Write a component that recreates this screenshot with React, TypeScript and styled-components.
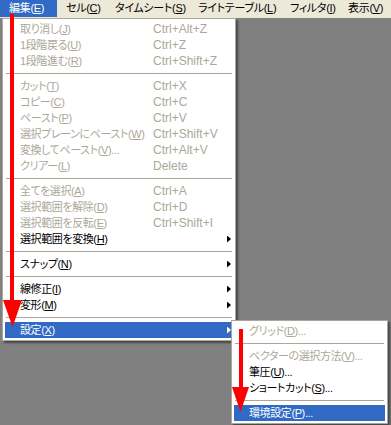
import React from "react";
import styled, { createGlobalStyle } from "styled-components";

const GlobalStyle = createGlobalStyle`
  html, body {
    margin: 0;
    padding: 0;
    background: #808080;
  }
  body {
    font-family: "Liberation Sans", "Noto Sans CJK JP", sans-serif;
    font-size: 12px;
    font-feature-settings: "palt";
  }
`;

const colors = {
  bar: "#ECE9D8",
  desk: "#808080",
  white: "#FFFFFF",
  border: "#ACA899",
  disabled: "#ACA899",
  highlight: "#316AC5",
  text: "#000000",
  arrow: "#FF0000",
};

type Entry =
  | { sep: true }
  | {
      sep?: false;
      label: string;
      accel: string;
      dots?: boolean;
      shortcut?: string;
      disabled?: boolean;
      sub?: boolean;
      active?: boolean;
    };

const editItems: Entry[] = [
  { label: "取り消し", accel: "J", shortcut: "Ctrl+Alt+Z", disabled: true },
  { label: "1段階戻る", accel: "U", shortcut: "Ctrl+Z", disabled: true },
  { label: "1段階進む", accel: "R", shortcut: "Ctrl+Shift+Z", disabled: true },
  { sep: true },
  { label: "カット", accel: "T", shortcut: "Ctrl+X", disabled: true },
  { label: "コピー", accel: "C", shortcut: "Ctrl+C", disabled: true },
  { label: "ペースト", accel: "P", shortcut: "Ctrl+V", disabled: true },
  { label: "選択プレーンにペースト", accel: "W", shortcut: "Ctrl+Shift+V", disabled: true },
  { label: "変換してペースト", accel: "V", dots: true, shortcut: "Ctrl+Alt+V", disabled: true },
  { label: "クリアー", accel: "L", shortcut: "Delete", disabled: true },
  { sep: true },
  { label: "全てを選択", accel: "A", shortcut: "Ctrl+A", disabled: true },
  { label: "選択範囲を解除", accel: "D", shortcut: "Ctrl+D", disabled: true },
  { label: "選択範囲を反転", accel: "E", shortcut: "Ctrl+Shift+I", disabled: true },
  { label: "選択範囲を変換", accel: "H", sub: true },
  { sep: true },
  { label: "スナップ", accel: "N", sub: true },
  { sep: true },
  { label: "線修正", accel: "I", sub: true },
  { label: "変形", accel: "M", sub: true },
  { sep: true },
  { label: "設定", accel: "X", sub: true, active: true },
];

const settingItems: Entry[] = [
  { label: "グリッド", accel: "D", dots: true, disabled: true },
  { sep: true },
  { label: "ベクターの選択方法", accel: "V", dots: true, disabled: true },
  { label: "筆圧", accel: "U", dots: true },
  { label: "ショートカット", accel: "S", dots: true },
  { sep: true },
  { label: "環境設定", accel: "P", dots: true, active: true },
];

const menuBarItems = [
  { label: "編集", accel: "E", width: 57, open: true },
  { label: "セル", accel: "C", width: 49 },
  { label: "タイムシート", accel: "S", width: 83 },
  { label: "ライトテーブル", accel: "L", width: 92 },
  { label: "フィルタ", accel: "I", width: 58 },
  { label: "表示", accel: "V", width: 52 },
];

const Screen = styled.div`
  position: relative;
  width: 391px;
  height: 425px;
  overflow: hidden;
  background: ${colors.desk};
`;

const MenuBar = styled.div`
  display: flex;
  align-items: flex-start;
  height: 18px;
  background: ${colors.bar};
`;

const BarItem = styled.div<{ $open?: boolean; $width: number }>`
  flex: none;
  box-sizing: border-box;
  width: ${({ $width }) => $width}px;
  padding-left: 9px;
  height: 17px;
  line-height: 17px;
  font-size: 11px;
  white-space: nowrap;
  letter-spacing: -0.3px;
  color: ${({ $open }) => ($open ? colors.white : colors.text)};
  background: ${({ $open }) => ($open ? colors.highlight : "transparent")};
`;

const Dropdown = styled.div<{ $left: number; $top: number; $width: number }>`
  position: absolute;
  left: ${({ $left }) => $left}px;
  top: ${({ $top }) => $top}px;
  width: ${({ $width }) => $width}px;
  box-sizing: border-box;
  padding: 2px;
  background: ${colors.white};
  border: 1px solid ${colors.border};
  box-shadow: 2px 2px 2px rgba(0, 0, 0, 0.45);
  display: flex;
  flex-direction: column;
`;

const Row = styled.div<{ $disabled?: boolean; $active?: boolean; $labelWidth: number }>`
  display: grid;
  grid-template-columns: ${({ $labelWidth }) => $labelWidth}px 1fr 6px;
  align-items: center;
  height: 16px;
  line-height: 16px;
  padding-left: 15px;
  white-space: nowrap;
  color: ${({ $disabled, $active }) =>
    $active ? colors.white : $disabled ? colors.disabled : colors.text};
  background: ${({ $active }) => ($active ? colors.highlight : "transparent")};
`;

const ItemText = styled.span`
  font-size: 11px;
  letter-spacing: -0.4px;
  overflow: hidden;
`;

const Shortcut = styled.span`
  white-space: nowrap;
`;

const SubArrow = styled.span<{ $active?: boolean }>`
  display: block;
  width: 4px;
  height: 7px;
  background: ${({ $active }) => ($active ? colors.white : colors.text)};
  clip-path: polygon(0 0, 100% 50%, 0 100%);
`;

const Separator = styled.div`
  height: 9px;
  display: flex;
  align-items: center;
  padding: 0 1px;

  &::before {
    content: "";
    flex: 1;
    height: 1px;
    background: ${colors.border};
  }
`;

const Overlay = styled.svg`
  position: absolute;
  inset: 0;
  pointer-events: none;
`;

const Label = ({ label, accel, dots }: { label: string; accel: string; dots?: boolean }) => (
  <>
    {label}(<u>{accel}</u>){dots ? "..." : ""}
  </>
);

const MenuList = ({ items, labelWidth }: { items: Entry[]; labelWidth: number }) => (
  <>
    {items.map((item, i) =>
      item.sep ? (
        <Separator key={i} />
      ) : (
        <Row
          key={i}
          $disabled={item.disabled}
          $active={item.active}
          $labelWidth={labelWidth}
        >
          <ItemText>
            <Label label={item.label} accel={item.accel} dots={item.dots} />
          </ItemText>
          <Shortcut>{item.shortcut ?? ""}</Shortcut>
          {item.sub ? <SubArrow $active={item.active} /> : <span />}
        </Row>
      )
    )}
  </>
);

export default function App() {
  return (
    <Screen>
      <GlobalStyle />
      <MenuBar>
        {menuBarItems.map((m) => (
          <BarItem key={m.label} $open={m.open} $width={m.width}>
            <Label label={m.label} accel={m.accel} />
          </BarItem>
        ))}
      </MenuBar>

      <Dropdown $left={2} $top={18} $width={234}>
        <MenuList items={editItems} labelWidth={133} />
      </Dropdown>

      <Dropdown $left={231} $top={320} $width={157}>
        <MenuList items={settingItems} labelWidth={130} />
      </Dropdown>

      <Overlay width={391} height={425} viewBox="0 0 391 425">
        <rect x={10} y={14} width={4} height={290} fill={colors.arrow} />
        <polygon points="3,300 22,300 12.5,327" fill={colors.arrow} />
        <rect x={239} y={329} width={4} height={62} fill={colors.arrow} />
        <polygon points="232,387 249,387 240.5,412" fill={colors.arrow} />
      </Overlay>
    </Screen>
  );
}
